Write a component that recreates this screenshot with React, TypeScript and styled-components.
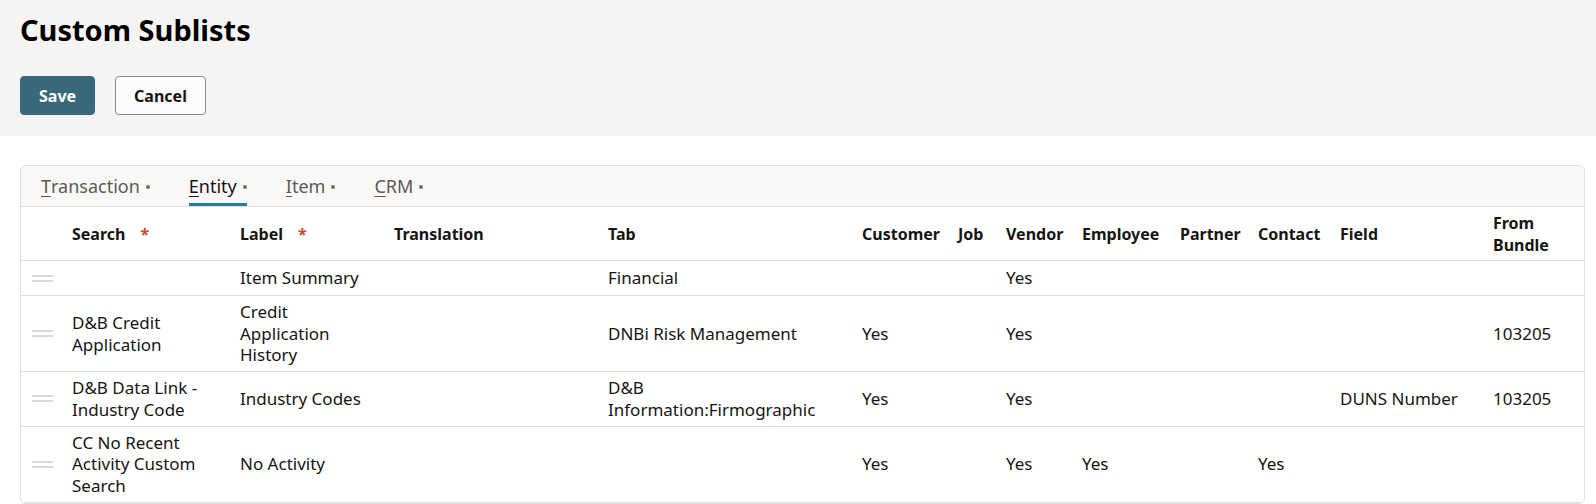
import React from "react";
import styled, { createGlobalStyle } from "styled-components";

const Global = createGlobalStyle`
  html, body { margin: 0; padding: 0; background: #ffffff; }
  body {
    font-family: "Noto Sans", "Open Sans", sans-serif;
    color: #161513;
    -webkit-font-smoothing: antialiased;
  }
  * { box-sizing: border-box; }
`;

const Page = styled.div`
  width: 100%;
`;

const Header = styled.header`
  background: #f5f4f2;
  padding: 11px 20px 21px;
`;

const Title = styled.h1`
  margin: 0;
  font-size: 29px;
  line-height: 37px;
  font-weight: 700;
  color: #000;
`;

const Toolbar = styled.div`
  display: flex;
  gap: 20px;
  margin-top: 28px;
`;

const Button = styled.button<{ $primary?: boolean }>`
  height: 39px;
  padding: 0 18px;
  border-radius: 4px;
  font-family: inherit;
  font-size: 16px;
  font-weight: 700;
  line-height: 1;
  cursor: pointer;
  border: 1px solid ${(p) => (p.$primary ? "#3a687b" : "#8b8a88")};
  background: ${(p) => (p.$primary ? "#3a687b" : "#fcfbfa")};
  color: ${(p) => (p.$primary ? "#ffffff" : "#161513")};
`;

const Main = styled.main`
  padding: 29px 11px 0 20px;
`;

const Card = styled.section`
  border: 1px solid #e0dfdd;
  border-radius: 6px;
  overflow: hidden;
  background: #fff;
`;

const TabBar = styled.nav`
  display: flex;
  gap: 39px;
  padding: 0 20px;
  height: 41px;
  background: #f9f8f6;
  border-bottom: 1px solid #e0dfdd;
`;

const Tab = styled.div<{ $active?: boolean }>`
  display: flex;
  align-items: center;
  font-size: 18px;
  color: ${(p) => (p.$active ? "#161513" : "#5b5a57")};
  border-top: 3px solid transparent;
  border-bottom: 3px solid ${(p) => (p.$active ? "#227e9e" : "transparent")};
`;

const Mnemonic = styled.span`
  text-decoration: underline;
  text-underline-offset: 3px;
  text-decoration-thickness: 1px;
`;

const Dot = styled.span`
  width: 4px;
  height: 4px;
  border-radius: 50%;
  background: #6f6e6b;
  margin-left: 6px;
  margin-top: 2px;
`;

const Table = styled.table`
  width: 100%;
  table-layout: fixed;
  border-collapse: separate;
  border-spacing: 0;
`;

const Th = styled.th<{ $pr: number }>`
  height: 54px;
  padding: 0 ${(p) => p.$pr}px 0 8px;
  text-align: left;
  vertical-align: middle;
  font-size: 16px;
  font-weight: 700;
  line-height: 22px;
  color: #161513;
  border-bottom: 1px solid #e0dfdd;
`;

const Td = styled.td<{ $pr: number }>`
  height: 35px;
  padding: 5px ${(p) => p.$pr}px 5px 8px;
  text-align: left;
  vertical-align: middle;
  font-size: 17px;
  line-height: 21.7px;
  color: #161513;
  border-bottom: 1px solid #e0dfdd;
`;

const HandleTd = styled.td`
  height: 35px;
  padding: 0 0 0 11px;
  vertical-align: middle;
  border-bottom: 1px solid #e0dfdd;
`;

const Handle = styled.span`
  display: block;
  width: 21px;
  height: 7px;
  border-top: 2px solid #d9d8d6;
  border-bottom: 2px solid #d9d8d6;
`;

const Required = styled.span`
  color: #c74634;
  margin-left: 15px;
`;

type Col = { key: string; label: string; w: number; pr: number; req?: boolean };

const cols: Col[] = [
  { key: "handle", label: "", w: 43, pr: 0 },
  { key: "search", label: "Search", w: 168, pr: 16, req: true },
  { key: "label", label: "Label", w: 154, pr: 16, req: true },
  { key: "translation", label: "Translation", w: 214, pr: 8 },
  { key: "tab", label: "Tab", w: 254, pr: 24 },
  { key: "customer", label: "Customer", w: 96, pr: 4 },
  { key: "job", label: "Job", w: 48, pr: 4 },
  { key: "vendor", label: "Vendor", w: 76, pr: 4 },
  { key: "employee", label: "Employee", w: 98, pr: 4 },
  { key: "partner", label: "Partner", w: 78, pr: 4 },
  { key: "contact", label: "Contact", w: 82, pr: 4 },
  { key: "field", label: "Field", w: 153, pr: 8 },
  { key: "bundle", label: "From Bundle", w: 99, pr: 8 },
];

type Row = Record<string, string>;

const rows: Row[] = [
  { label: "Item Summary", tab: "Financial", vendor: "Yes" },
  {
    search: "D&B Credit Application",
    label: "Credit Application History",
    tab: "DNBi Risk Management",
    customer: "Yes",
    vendor: "Yes",
    bundle: "103205",
  },
  {
    search: "D&B Data Link - Industry Code",
    label: "Industry Codes",
    tab: "D&B Information:Firmographic",
    customer: "Yes",
    vendor: "Yes",
    field: "DUNS Number",
    bundle: "103205",
  },
  {
    search: "CC No Recent Activity Custom Search",
    label: "No Activity",
    customer: "Yes",
    vendor: "Yes",
    employee: "Yes",
    contact: "Yes",
  },
];

const tabs = [
  { first: "T", rest: "ransaction" },
  { first: "E", rest: "ntity", active: true },
  { first: "I", rest: "tem" },
  { first: "C", rest: "RM" },
];

export default function App() {
  return (
    <Page>
      <Global />
      <Header>
        <Title>Custom Sublists</Title>
        <Toolbar>
          <Button $primary>Save</Button>
          <Button>Cancel</Button>
        </Toolbar>
      </Header>
      <Main>
        <Card>
          <TabBar>
            {tabs.map((t) => (
              <Tab key={t.first} $active={t.active}>
                <Mnemonic>{t.first}</Mnemonic>
                {t.rest}
                <Dot />
              </Tab>
            ))}
          </TabBar>
          <Table>
            <colgroup>
              {cols.map((c) => (
                <col key={c.key} style={{ width: c.w }} />
              ))}
            </colgroup>
            <thead>
              <tr>
                {cols.map((c) => (
                  <Th key={c.key} $pr={c.pr}>
                    {c.label}
                    {c.req && <Required>*</Required>}
                  </Th>
                ))}
              </tr>
            </thead>
            <tbody>
              {rows.map((r, i) => (
                <tr key={i}>
                  {cols.map((c) =>
                    c.key === "handle" ? (
                      <HandleTd key={c.key}>
                        <Handle />
                      </HandleTd>
                    ) : (
                      <Td key={c.key} $pr={c.pr}>
                        {r[c.key] ?? ""}
                      </Td>
                    )
                  )}
                </tr>
              ))}
            </tbody>
          </Table>
        </Card>
      </Main>
    </Page>
  );
}
